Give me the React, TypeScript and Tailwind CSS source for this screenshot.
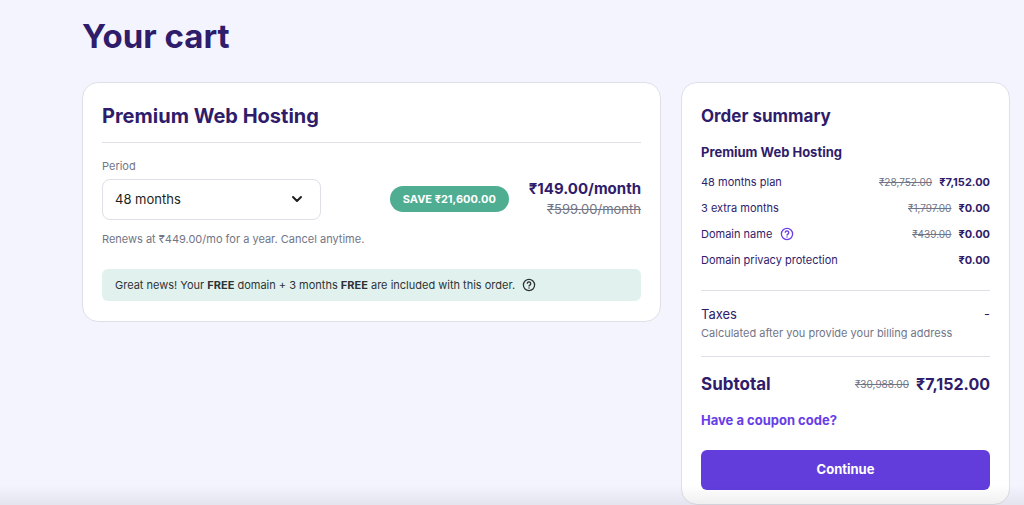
import { ReactNode } from "react";
import { ChevronDown } from "lucide-react";

const summaryItems = [
  { label: "48 months plan", oldPrice: "₹28,752.00", price: "₹7,152.00" },
  { label: "3 extra months", oldPrice: "₹1,797.00", price: "₹0.00" },
  { label: "Domain name", oldPrice: "₹439.00", price: "₹0.00", help: true },
  { label: "Domain privacy protection", price: "₹0.00" },
];

const HelpIcon = () => (
  <svg viewBox="0 0 24 24" className="size-[14px]" fill="none" stroke="currentColor" strokeWidth="2.2">
    <circle cx="12" cy="12" r="9.6" />
    <path d="M9 9.7a3 3 0 1 1 4.6 2.5c-1 .7-1.6 1.1-1.6 2.2" />
    <circle cx="12" cy="17" r="1.3" fill="currentColor" stroke="none" />
  </svg>
);

const HelpButton = ({ label }: { label: string }) => (
  <button type="button" aria-label={label} className="flex shrink-0">
    <HelpIcon />
  </button>
);

const Card = ({ className, children }: { className: string; children: ReactNode }) => (
  <section className={`rounded-2xl border border-[#dfdfe9] bg-white px-[19px] ${className}`}>
    {children}
  </section>
);

const PlanCard = () => (
  <Card className="min-w-0 flex-1 pt-[19px] pb-5">
    <h2 className="border-b border-[#dfdfe9] pb-3 text-xl leading-7 font-bold">
      Premium Web Hosting
    </h2>
    <div className="flex items-center pt-[14px]">
      <div className="w-[219px]">
        <label htmlFor="period" className="block text-[11px] leading-[18px] text-[#727586]">
          Period
        </label>
        <div className="relative mt-1">
          <select
            id="period"
            defaultValue="48"
            className="h-[41px] w-full appearance-none rounded-lg border border-[#dfdfe6] bg-white px-3 text-[13px] text-[#1d1e20]"
          >
            <option value="48">48 months</option>
            <option value="24">24 months</option>
            <option value="12">12 months</option>
            <option value="1">1 month</option>
          </select>
          <ChevronDown
            strokeWidth={3}
            className="pointer-events-none absolute top-3 right-4 size-4 text-[#1d1e20]"
          />
        </div>
      </div>
      <div className="ml-auto flex items-center gap-5 pt-5">
        <span className="rounded-full bg-[#4fad92] px-[13px] py-1 text-[11px] leading-[18px] font-bold text-white">
          SAVE ₹21,600.00
        </span>
        <p className="text-right">
          <span className="block text-[15px] leading-5 font-bold">₹149.00/month</span>
          <s className="block text-[13px] leading-5 text-[#727586]">₹599.00/month</s>
        </p>
      </div>
    </div>
    <p className="pt-[10px] text-[11px] leading-[18px] text-[#727586]">
      Renews at ₹449.00/mo for a year. Cancel anytime.
    </p>
    <div className="mt-[21px] flex items-center gap-[7px] rounded-md bg-[#e1f2ee] px-[13px] py-[7px] text-[11px] leading-[18px] text-[#2f3337]">
      <p>
        Great news! Your <b>FREE</b> domain + 3 months <b>FREE</b> are included with this order.
      </p>
      <HelpButton label="About the free domain" />
    </div>
  </Card>
);

const OrderSummary = () => (
  <Card className="w-[329px] shrink-0 pt-[19px] pb-[14px]">
    <h2 className="text-[17px] leading-7 font-bold">Order summary</h2>
    <h3 className="pt-[13px] text-[13px] leading-[18px] font-bold">Premium Web Hosting</h3>
    <ul className="flex flex-col gap-2 pt-3">
      {summaryItems.map((item) => (
        <li key={item.label} className="flex items-center text-[11px] leading-[18px]">
          <span>{item.label}</span>
          {item.help && (
            <span className="ml-2 text-[#673de6]">
              <HelpButton label="About the domain name" />
            </span>
          )}
          <span className="ml-auto flex items-center gap-[7px]">
            {item.oldPrice && <s className="text-[10px] text-[#727586]">{item.oldPrice}</s>}
            <b>{item.price}</b>
          </span>
        </li>
      ))}
    </ul>
    <div className="mt-[21px] border-y border-[#dfdfe6] pt-[13px] pb-[14px]">
      <div className="flex justify-between text-[13px] leading-5">
        <span>Taxes</span>
        <span>-</span>
      </div>
      <p className="text-[11px] leading-[18px] text-[#727586]">
        Calculated after you provide your billing address
      </p>
    </div>
    <div className="flex items-center pt-[13px]">
      <span className="text-[17px] leading-7 font-bold">Subtotal</span>
      <s className="ml-auto text-[10px] text-[#727586]">₹30,988.00</s>
      <b className="ml-[7px] text-base leading-7">₹7,152.00</b>
    </div>
    <a href="#coupon" className="mt-3 block text-[13px] leading-5 font-bold text-[#673de6]">
      Have a coupon code?
    </a>
    <button
      type="button"
      className="mt-5 h-10 w-full rounded-md bg-[#623ddc] text-[13px] font-bold text-white"
    >
      Continue
    </button>
  </Card>
);

const App = () => (
  <main className="min-h-screen bg-[#f4f4ff] pt-4 pr-[14px] pl-[82px] font-['Inter',sans-serif] text-[#2f1c6a]">
    <h1 className="text-[33px] leading-10 font-bold">Your cart</h1>
    <div className="flex items-start gap-5 pt-[26px]">
      <PlanCard />
      <OrderSummary />
    </div>
    <div className="pointer-events-none fixed inset-x-0 bottom-0 h-5 bg-linear-to-t from-[#1d1e20]/7 to-transparent" />
  </main>
);

export default App;
